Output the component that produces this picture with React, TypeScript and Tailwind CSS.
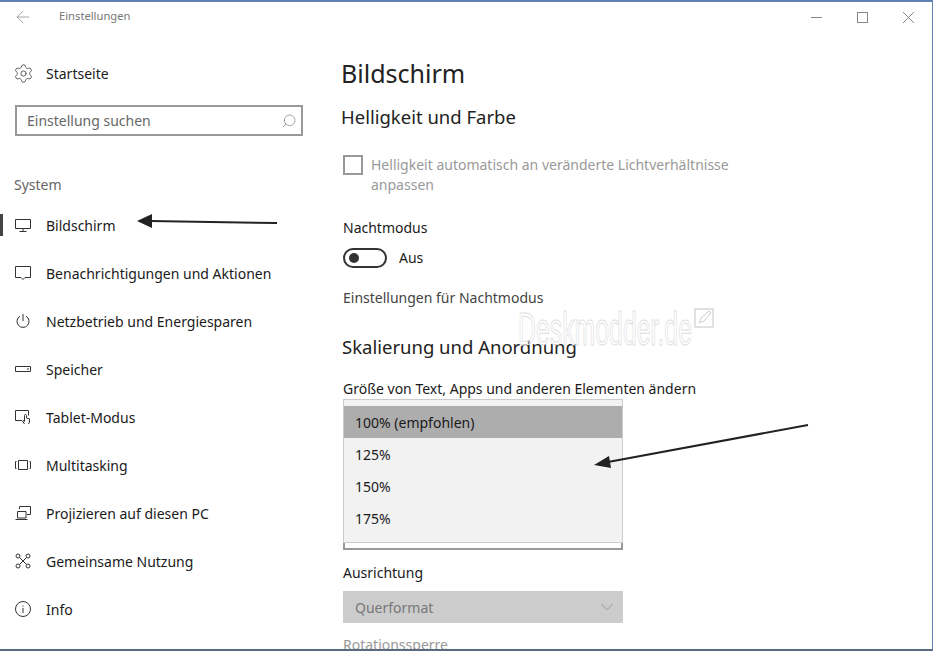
import { Settings, Search, ArrowLeft, ChevronDown } from "lucide-react";
import type { ReactNode } from "react";

const stroke = {
  fill: "none",
  stroke: "#333",
  strokeWidth: 1,
};

function Icon({ children }: { children: ReactNode }) {
  return (
    <svg width="16" height="16" viewBox="0 0 16 16" className="shrink-0" {...stroke}>
      {children}
    </svg>
  );
}

const items: { label: string; active?: boolean; icon: ReactNode }[] = [
  {
    label: "Bildschirm",
    active: true,
    icon: (
      <Icon>
        <path d="M.5 2.5h15v9H.5zM8 11.5v3M4.5 14.5h7" />
      </Icon>
    ),
  },
  {
    label: "Benachrichtigungen und Aktionen",
    icon: (
      <Icon>
        <path d="M.5 1.500h15v11H10l-2 2-2-2H.5z" />
      </Icon>
    ),
  },
  {
    label: "Netzbetrieb und Energiesparen",
    icon: (
      <Icon>
        <path d="M8 1v7M5 3.200a6 6 0 1 0 6 0" />
      </Icon>
    ),
  },
  {
    label: "Speicher",
    icon: (
      <Icon>
        <path d="M.5 5.500h15v5H.5zM12 8h2" />
      </Icon>
    ),
  },
  {
    label: "Tablet-Modus",
    icon: (
      <Icon>
        <path d="M7 11.500H.5v-10h13v5M9.500 15l-2-3 .8-.6 1.200 1V6.500a1 1 0 0 1 2 0V9l3 .8V13l-1 2" />
      </Icon>
    ),
  },
  {
    label: "Multitasking",
    icon: (
      <Icon>
        <path d="M3.500 3.500h9v9h-9zM1.500 4.500H.5v7h1M14.500 4.500h1v7h-1" />
      </Icon>
    ),
  },
  {
    label: "Projizieren auf diesen PC",
    icon: (
      <Icon>
        <path d="M4.500 4V1.500h11v8H12M2.500 6.500h8.500v6.500h-8.500zM.5 14.500h12" />
      </Icon>
    ),
  },
  {
    label: "Gemeinsame Nutzung",
    icon: (
      <Icon>
        <circle cx="3" cy="3" r="2" />
        <circle cx="13" cy="3" r="2" />
        <circle cx="3" cy="13" r="2" />
        <circle cx="13" cy="13" r="2" />
        <path d="M4.500 4.500l7 7M11.500 4.500l-7 7" />
      </Icon>
    ),
  },
  {
    label: "Info",
    icon: (
      <Icon>
        <circle cx="8" cy="8" r="7.500" />
        <path d="M8 7v5M8 4.500v1.200" />
      </Icon>
    ),
  },
];

const scales = ["100% (empfohlen)", "125%", "150%", "175%"];

function Sidebar() {
  return (
    <aside className="w-[341px] shrink-0 flex flex-col">
      <div className="flex items-center h-[48px] pl-[13px] gap-[12px] text-[#1a1a1a] mt-[17px]">
        <Settings size={21} strokeWidth={0.9} className="text-[#333]" />
        Startseite
      </div>
      <div className="ml-[15px] mt-[8px] w-[288px] h-[31px] border-2 border-[#999] flex items-center justify-between pl-[10px] pr-[4px] text-[#666]">
        Einstellung suchen
        <Search size={16} strokeWidth={1} className="text-[#777] -scale-x-100" />
      </div>
      <div className="mt-[36px] pl-[14px] h-[24px] flex items-center text-[#666]">System</div>
      <nav className="mt-[5px] flex flex-col">
        {items.map((item) => (
          <div key={item.label} className="relative flex items-center h-[48px] pl-[15px] gap-[15px] text-[#1a1a1a]">
            {item.active && <span className="absolute left-0 top-[13px] w-[3px] h-[22px] bg-[#444]" />}
            {item.icon}
            {item.label}
          </div>
        ))}
      </nav>
    </aside>
  );
}

function Content() {
  return (
    <main className="flex-1 flex flex-col text-[#1a1a1a]">
      <h1 className="text-[25px] leading-[36px] mt-[23px] text-[#222]">Bildschirm</h1>
      <h2 className="text-[18.500px] leading-[26px] mt-[13px] text-[#222]">Helligkeit und Farbe</h2>
      <div className="flex mt-[24px] ml-[2px] gap-[8px] text-[#999] w-[400px]">
        <span className="w-[20px] h-[20px] border-2 border-[#999] shrink-0 mt-[1px]" />
        <p className="leading-[20px] mt-[1px]">Helligkeit automatisch an veränderte Lichtverhältnisse anpassen</p>
      </div>
      <div className="mt-[23px] ml-[2px] leading-[20px]">Nachtmodus</div>
      <div className="flex items-center mt-[9px] ml-[2px] gap-[12px]">
        <span className="w-[44px] h-[20px] border-2 border-[#333] rounded-full flex items-center pl-[4px]">
          <span className="w-[10px] h-[10px] rounded-full bg-[#333]" />
        </span>
        Aus
      </div>
      <div className="mt-[20px] ml-[2px] leading-[20px] text-[#444]">Einstellungen für Nachtmodus</div>
      <h2 className="text-[18.500px] leading-[26px] mt-[26px] ml-[1px] text-[#222]">Skalierung und Anordnung</h2>
      <div className="mt-[19px] ml-[2px] leading-[20px]">Größe von Text, Apps und anderen Elementen ändern</div>
      <div className="relative ml-[2px] w-[280px] h-[151px] shrink-0 border-2 border-t-0 border-[#999] bg-white">
        <ul className="absolute -left-[2px] top-0 w-[280px] h-[144px] bg-[#f2f2f2] border border-[#ccc] pt-[6px]">
          {scales.map((s, i) => (
            <li key={s} className={`h-[32px] flex items-center pl-[11px] ${i === 0 ? "bg-[#adadad]" : ""}`}>
              {s}
            </li>
          ))}
        </ul>
      </div>
      <div className="mt-[13px] ml-[2px] leading-[20px]">Ausrichtung</div>
      <div className="mt-[8px] ml-[2px] w-[280px] h-[32px] shrink-0 bg-[#cccccc] flex items-center justify-between pl-[12px] pr-[5px] text-[#777]">
        Querformat
        <ChevronDown size={22} strokeWidth={0.8} className="text-[#888]" />
      </div>
      <div className="mt-[12px] ml-[2px] leading-[20px] text-[#999] shrink-0">Rotationssperre</div>
    </main>
  );
}

// Pfeile und Wasserzeichen liegen ueber dem Screenshot
function Overlays() {
  return (
    <>
      <svg className="absolute left-0 top-0 pointer-events-none" width="933" height="651">
        <path d="M150 219 L277 221" stroke="#222" strokeWidth="2" fill="none" />
        <path d="M137 219 L152 212 L152 226 Z" fill="#222" />
        <path d="M608 460 L808 423" stroke="#222" strokeWidth="2" fill="none" />
        <path d="M594 463 L609 454 L611 466 Z" fill="#222" />
      </svg>
      <div className="absolute left-[518px] top-[303px] w-[174px] h-[48px] pointer-events-none">
        <span className="block origin-left scale-x-[0.54] whitespace-nowrap text-[46px] leading-[48px] text-white/40 [-webkit-text-stroke:1px_#dedede] font-['Liberation_Sans',sans-serif]">
          Deskmodder.de
        </span>
      </div>
      <svg className="absolute left-[694px] top-[306px] pointer-events-none" width="20" height="20" viewBox="0 0 20 20" fill="none">
        <rect x="1" y="1" width="18" height="18" stroke="#d8d8d8" strokeWidth="1.500" />
        <path d="M5 15l2-5 8-7 2 2-7 8z" stroke="#ccc" />
      </svg>
    </>
  );
}

export default function App() {
  return (
    <div className="relative w-[933px] h-[651px] overflow-hidden bg-white flex flex-col border-t-2 border-t-[#5f82b3] border-b-2 border-b-[#5a6b80] border-r border-r-[#5f82b3] text-[14px] font-['Noto_Sans',sans-serif]">
      <header className="flex items-center h-[30px] shrink-0 text-[#777]">
        <ArrowLeft size={20} strokeWidth={0.9} className="ml-[13px] text-[#888]" />
        <span className="ml-[26px] -mt-[2px] text-[11.200px]">Einstellungen</span>
        <div className="ml-auto flex items-center gap-[35px] pr-[18px]">
          <span className="w-[11px] h-px bg-[#888]" />
          <span className="w-[11px] h-[11px] border border-[#888]" />
          <svg width="11" height="11" viewBox="0 0 11 11" stroke="#888" fill="none">
            <path d="M0 0l11 11M11 0L0 11" />
          </svg>
        </div>
      </header>
      <div className="flex flex-1 min-h-0">
        <Sidebar />
        <Content />
      </div>
      <Overlays />
    </div>
  );
}
